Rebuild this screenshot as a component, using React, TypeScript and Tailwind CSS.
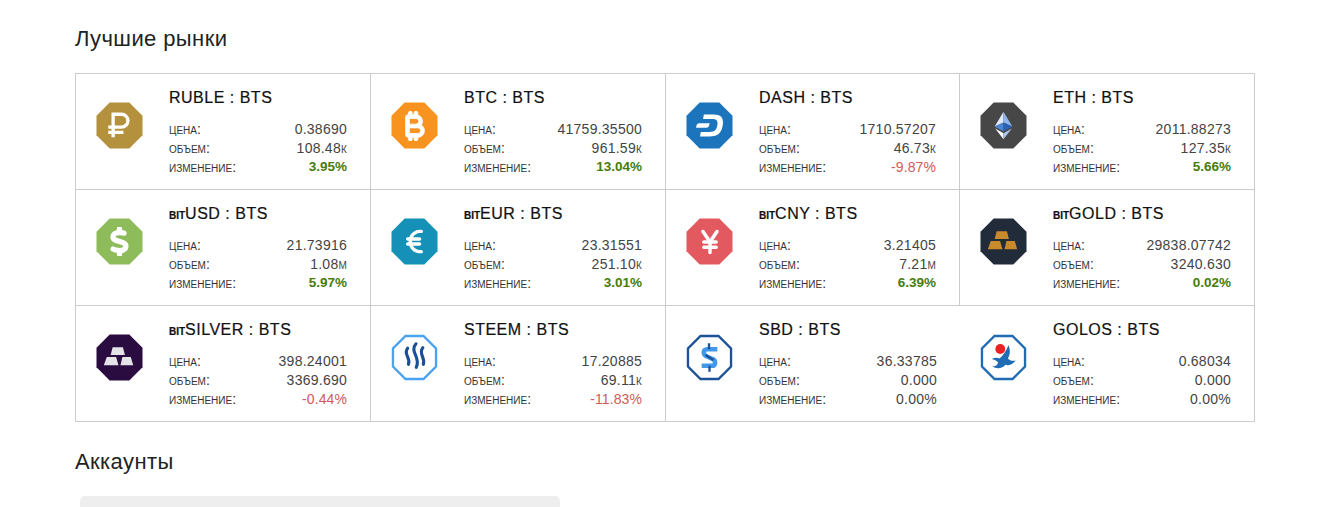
import type { ReactNode } from 'react';
import { FaBitcoinSign, FaDollarSign, FaEuroSign, FaYenSign } from 'react-icons/fa6';
import { SiDash } from 'react-icons/si';

const OCTAGON = '14,0.5 34,0.5 47.5,14 47.5,34 34,47.5 14,47.5 0.5,34 0.5,14';
const OCTAGON_LINE = '14.8,2 33.2,2 46,14.8 46,33.2 33.2,46 14.8,46 2,33.2 2,14.8';

function Solid({ color, children }: { color: string; children?: ReactNode }) {
  return (
    <svg className="h-[47px] w-[47px]" viewBox="0 0 48 48">
      <polygon points={OCTAGON} fill={color} />
      {children}
    </svg>
  );
}

function Outline({ color, children }: { color: string; children?: ReactNode }) {
  return (
    <svg className="h-[47px] w-[47px]" viewBox="0 0 48 48">
      <polygon points={OCTAGON_LINE} fill="#fff" stroke={color} strokeWidth="2.4" />
      {children}
    </svg>
  );
}

function Bars({ bg, fill }: { bg: string; fill: string }) {
  return (
    <Solid color={bg}>
      <polygon points="17,13.5 27.5,13.5 29.5,21.5 15,21.5" fill={fill} />
      <polygon points="11,23.5 20.5,23.5 23,32 8,32" fill={fill} />
      <polygon points="27,23.5 35.5,23.5 38,32 25,32" fill={fill} />
    </Solid>
  );
}

function Glyph({ color, children }: { color: string; children: ReactNode }) {
  return (
    <div className="relative h-[47px] w-[47px]">
      <Solid color={color} />
      <div className="absolute inset-0 flex items-center justify-center text-white">{children}</div>
    </div>
  );
}

const ICONS: Record<string, ReactNode> = {
  RUBLE: (
    <Solid color="#b4913d">
      <path
        d="M17.5 36V12.500H26a6.600 6.600 0 0 1 0 13.200H12.500M12.500 31H28"
        fill="none"
        stroke="#fff"
        strokeWidth="3.4"
      />
    </Solid>
  ),
  BTC: (
    <Glyph color="#f7931e">
      <FaBitcoinSign size={30} stroke="currentColor" strokeWidth={14} />
    </Glyph>
  ),
  DASH: (
    <Glyph color="#1c75bc">
      <SiDash size={27} />
    </Glyph>
  ),
  ETH: (
    <Solid color="#474747">
      <polygon points="24,10 15,25 24,21" fill="#dfe9f7" />
      <polygon points="24,10 33,25 24,21" fill="#8fb6ea" />
      <polygon points="24,21 15,25 24,30" fill="#4a84d2" />
      <polygon points="24,21 33,25 24,30" fill="#2a62b5" />
      <polygon points="15.500,27 24,32 24,38" fill="#fff" />
      <polygon points="32.500,27 24,32 24,38" fill="#a9c6ee" />
    </Solid>
  ),
  USD: (
    <Glyph color="#8fbc5a">
      <FaDollarSign size={29} stroke="currentColor" strokeWidth={30} />
    </Glyph>
  ),
  EUR: (
    <Glyph color="#1591b8">
      <FaEuroSign size={27} />
    </Glyph>
  ),
  CNY: (
    <Glyph color="#e25a60">
      <FaYenSign size={28} />
    </Glyph>
  ),
  GOLD: <Bars bg="#222b3a" fill="#c98a2c" />,
  SILVER: <Bars bg="#2b0c40" fill="#e5e3e8" />,
  STEEM: (
    <Outline color="#4ba2ee">
      <g fill="none" stroke="#1a5099" strokeWidth="3.2" strokeLinecap="round">
        <path d="M17 14.500c-5 6 3.500 9.500.8 16.500" />
        <path d="M25.500 10c-7 8 5.500 14 .3 24" />
        <path d="M32.500 14c-5 6 3 10 .5 17" />
      </g>
    </Outline>
  ),
  SBD: (
    <Outline color="#1d5298">
      <path
        d="M32 15.500H21.500c-4.500 0-4.500 6 0 7.500l5.500 2.500c4 1.500 3.500 7-.5 7H16"
        fill="none"
        stroke="#4098ea"
        strokeWidth="4.600"
      />
      <path d="M23.500 9.500v6M20 21.500l8 5M24 32.500v6" fill="none" stroke="#1d5298" strokeWidth="2.400" />
    </Outline>
  ),
  GOLOS: (
    <Outline color="#1f6cb5">
      <circle cx="20.700" cy="15.300" r="5" fill="#ed2024" />
      <path
        d="M29 11.500c2.500 5 1.500 10-.5 13.500 2 2 4.500 3 8 2-3 4-7 5.500-10.500 4.500-3 4-9.500 4.500-13.500 1.500 3 0 5.500-1.500 6-4-1.500-2-4-3-6.500-3.500 3-1.500 6-1.500 8-.5 3.500-3 7-8 9-13.500z"
        fill="#1f6cb5"
      />
    </Outline>
  ),
};

type Market = {
  id: string;
  bit?: boolean;
  name: string;
  price: string;
  volume: string;
  change: string;
  tone?: 'up' | 'down';
  noRight?: boolean;
};

const MARKETS: Market[] = [
  { id: 'RUBLE', name: 'RUBLE', price: '0.38690', volume: '108.48к', change: '3.95%', tone: 'up' },
  { id: 'BTC', name: 'BTC', price: '41759.35500', volume: '961.59к', change: '13.04%', tone: 'up' },
  { id: 'DASH', name: 'DASH', price: '1710.57207', volume: '46.73к', change: '-9.87%', tone: 'down' },
  { id: 'ETH', name: 'ETH', price: '2011.88273', volume: '127.35к', change: '5.66%', tone: 'up', noRight: true },
  { id: 'USD', bit: true, name: 'USD', price: '21.73916', volume: '1.08м', change: '5.97%', tone: 'up' },
  { id: 'EUR', bit: true, name: 'EUR', price: '23.31551', volume: '251.10к', change: '3.01%', tone: 'up' },
  { id: 'CNY', bit: true, name: 'CNY', price: '3.21405', volume: '7.21м', change: '6.39%', tone: 'up' },
  { id: 'GOLD', bit: true, name: 'GOLD', price: '29838.07742', volume: '3240.630', change: '0.02%', tone: 'up', noRight: true },
  { id: 'SILVER', bit: true, name: 'SILVER', price: '398.24001', volume: '3369.690', change: '-0.44%', tone: 'down' },
  { id: 'STEEM', name: 'STEEM', price: '17.20885', volume: '69.11к', change: '-11.83%', tone: 'down' },
  { id: 'SBD', name: 'SBD', price: '36.33785', volume: '0.000', change: '0.00%', noRight: true },
  { id: 'GOLOS', name: 'GOLOS', price: '0.68034', volume: '0.000', change: '0.00%', noRight: true },
];

function Row({ label, children }: { label: string; children: ReactNode }) {
  return (
    <div className="flex h-[19px] items-center justify-between">
      <span className="text-[14px] text-[#333] [font-variant:small-caps]">{label}</span>
      {children}
    </div>
  );
}

function MarketCard({ market, lastRow }: { market: Market; lastRow: boolean }) {
  const changeClass =
    market.tone === 'up'
      ? 'text-[13.5px] font-bold text-[#457d0c]'
      : market.tone === 'down'
        ? 'text-[14px] tracking-[0.1px] text-[#d05a5a]'
        : 'text-[14px] tracking-[0.25px] text-[#444]';

  return (
    <div
      className={`flex pl-[20px] pr-[23px] ${lastRow ? 'h-[115px]' : 'h-[116px] border-b border-[#ccc]'} ${market.noRight ? '' : 'border-r border-[#ccc]'}`}
    >
      <div className="mt-[28px] w-[47px] shrink-0">{ICONS[market.id]}</div>
      <div className="ml-[26px] flex-1">
        <div className="mt-[13px] h-[22px] text-[16px] leading-[22px] tracking-[0.5px] text-[#111] [-webkit-text-stroke:0.2px_#111]">
          {market.bit && <span className="text-[14px] font-bold tracking-normal [font-variant:small-caps]">bit</span>}
          {market.name} : BTS
        </div>
        <div className="mt-[11px]">
          <Row label="цена:">
            <span className="text-[14px] tracking-[0.25px] text-[#444]">{market.price}</span>
          </Row>
          <Row label="объем:">
            <span className="text-[14px] tracking-[0.25px] text-[#444] [font-variant:small-caps]">{market.volume}</span>
          </Row>
          <Row label="изменение:">
            <span className={changeClass}>{market.change}</span>
          </Row>
        </div>
      </div>
    </div>
  );
}

export default function App() {
  return (
    <div className="h-[507px] overflow-hidden bg-white font-['Liberation_Sans',Arial,sans-serif] text-[#222]">
      <div className="ml-[75px] w-[1180px]">
        <h2 className="pt-[26px] text-[22px] leading-[26px] tracking-[0.4px] text-[#222]">Лучшие рынки</h2>
        <div className="mt-[21px] grid grid-cols-[295px_295px_294px_294px] border border-[#ccc]">
          {MARKETS.map((market, i) => (
            <MarketCard key={market.id} market={market} lastRow={i >= 8} />
          ))}
        </div>
        <h2 className="mt-[27px] text-[22px] leading-[26px] tracking-[0.4px] text-[#222]">Аккаунты</h2>
        <div className="ml-[5px] mt-[21px] h-[40px] w-[480px] rounded-[5px] bg-[#eee]" />
      </div>
    </div>
  );
}
